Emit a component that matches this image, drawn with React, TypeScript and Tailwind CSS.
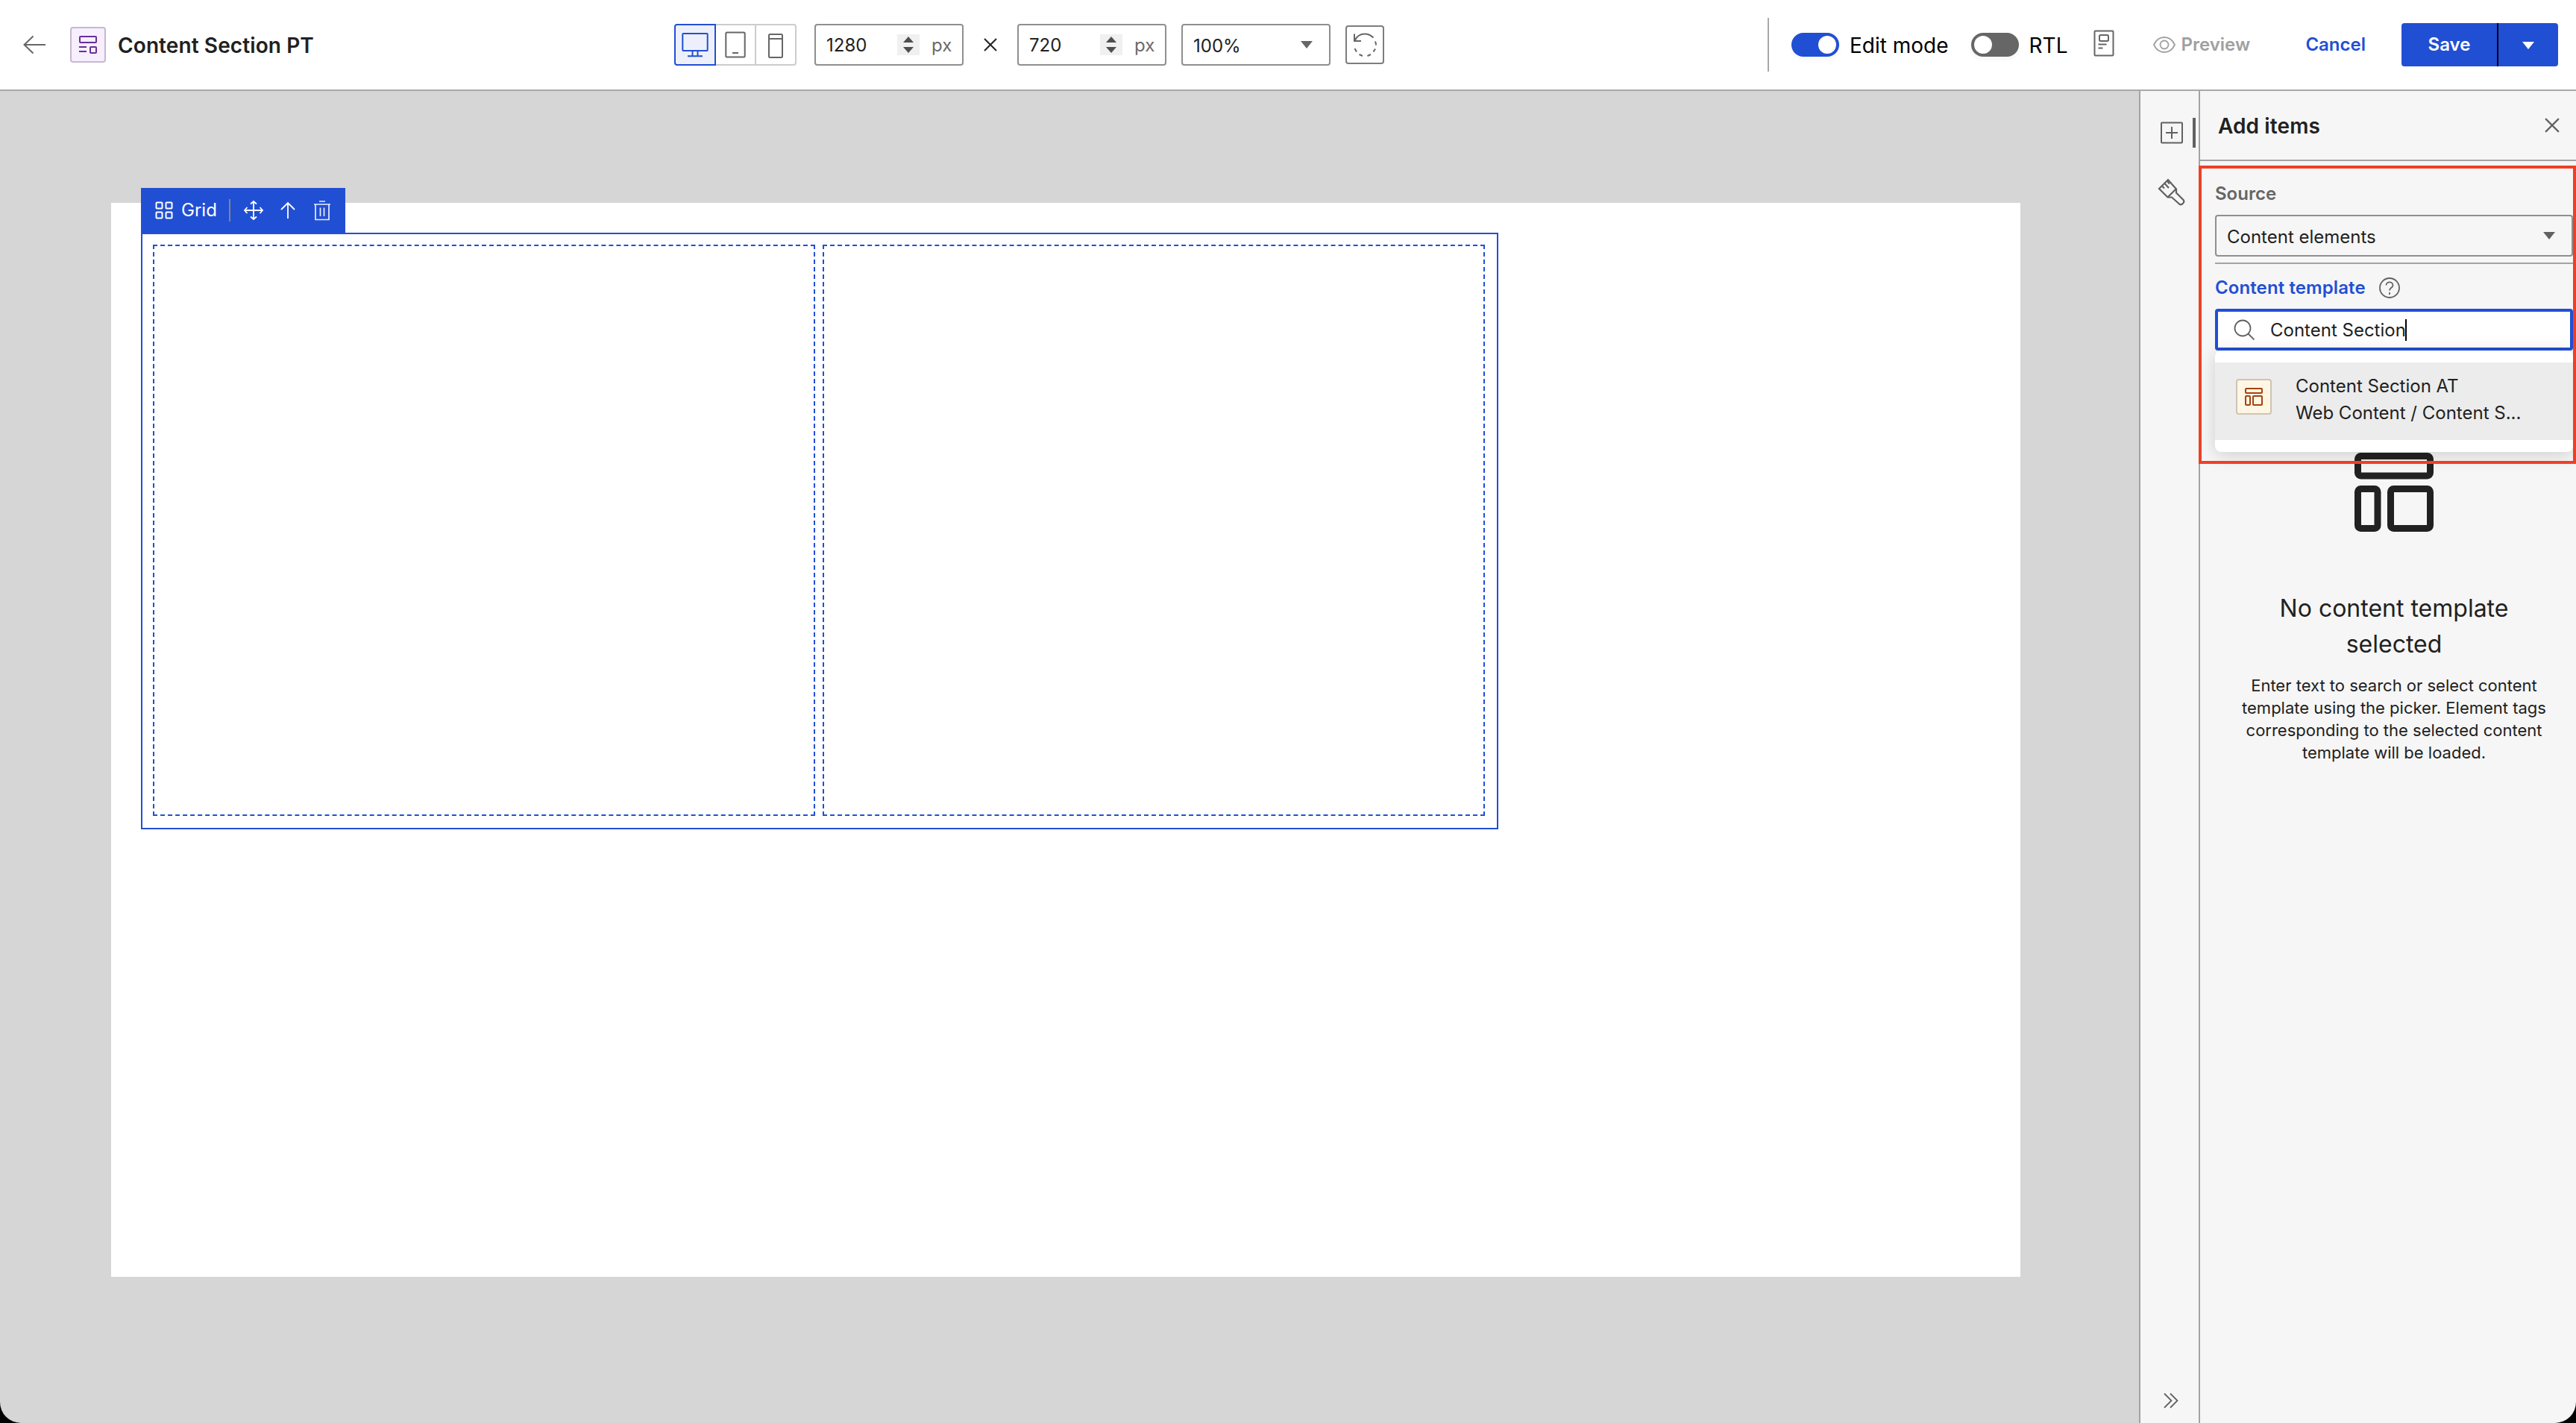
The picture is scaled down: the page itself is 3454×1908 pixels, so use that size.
import type { ReactNode } from 'react';

interface GlyphProps {
  className?: string;
}

interface TemplateGlyphProps extends GlyphProps {
  size: number;
  strokeWidth: number;
}

function ArrowLeftGlyph({ className }: GlyphProps) {
  return (
    <svg width="32" height="26" viewBox="0 0 32 26" fill="none" stroke="currentColor" strokeWidth="2" className={className}>
      <path d="M31 13H2M14.5 1.5L2.5 13l12 11.5" />
    </svg>
  );
}

function CrossGlyph({ className }: GlyphProps) {
  return (
    <svg viewBox="0 0 18 18" fill="none" stroke="currentColor" strokeWidth="2" className={className}>
      <path d="M1 1l16 16M17 1L1 17" />
    </svg>
  );
}

function Caret({ className }: GlyphProps) {
  return (
    <svg width="16" height="10" viewBox="0 0 16 10" fill="currentColor" className={className}>
      <path d="M0 0h16L8 10z" />
    </svg>
  );
}

// Header block on top, narrow + wide block below
function TemplateGlyph({ size, strokeWidth, className }: TemplateGlyphProps) {
  return (
    <svg width={size} height={size} viewBox="0 0 24 24" fill="none" stroke="currentColor" strokeWidth={strokeWidth} className={className}>
      <rect x="1" y="1" width="22" height="6" rx="1" />
      <rect x="1" y="11" width="6" height="12" rx="1" />
      <rect x="11" y="11" width="12" height="12" rx="1" />
    </svg>
  );
}

function NumberField({ value }: { value: string }) {
  return (
    <div className="flex h-14 w-[200px] items-center rounded border-2 border-[#8f8f8f] bg-white pl-[14px] text-2xl">
      <span className="w-[95px] pt-0.5 text-[#212121]">{value}</span>
      <span className="flex h-7 w-[30px] items-center justify-center bg-[#f0f0f0] text-[#4f4f4f]">
        <svg width="14" height="22" viewBox="0 0 14 22" fill="currentColor">
          <path d="M0 8h14L7 0zM0 14h14l-7 8z" />
        </svg>
      </span>
      <span className="ml-4 pt-0.5 text-[#6b6b6b]">px</span>
    </div>
  );
}

function Toggle({ on, children }: { on: boolean; children: ReactNode }) {
  return (
    <div className="flex items-center">
      <span
        className={
          on
            ? 'flex h-8 w-16 items-center justify-end rounded-full bg-[#214fd4] px-1 shadow-[0_3px_6px_rgba(0,0,0,0.05)]'
            : 'flex h-8 w-16 items-center rounded-full bg-[#666666] px-1 shadow-[0_3px_6px_rgba(0,0,0,0.05)]'
        }
      >
        <span className="size-6 rounded-full bg-white" />
      </span>
      <span className="ml-[14px] pt-0.5 text-[28px] leading-10 text-black">{children}</span>
    </div>
  );
}

function DeviceSwitcher() {
  return (
    <div className="flex h-14 w-[164px]">
      <button className="flex w-14 items-center justify-center rounded-l border-2 border-[#214fd4] bg-[#edf0fc] text-[#214fd4]">
        <svg width="36" height="34" viewBox="0 0 36 34" fill="none" stroke="currentColor" strokeWidth="2">
          <rect x="1.3" y="2" width="33.4" height="23" rx="1" />
          <path d="M14.5 25v7M21.5 25v7M8 32.3h20" />
        </svg>
      </button>
      <button className="flex w-[54px] items-center justify-center border-y-2 border-r-2 border-[#cccccc] text-[#666666]">
        <svg width="28" height="36" viewBox="0 0 28 36" fill="none" stroke="currentColor" strokeWidth="2">
          <rect x="1.3" y="1.5" width="25.4" height="33" rx="1.5" />
          <path d="M10 29h8" />
        </svg>
      </button>
      <button className="flex w-[54px] items-center justify-center rounded-r border-y-2 border-r-2 border-[#cccccc] pt-0.5 text-[#666666]">
        <svg width="20" height="34" viewBox="0 0 20 34" fill="none" stroke="currentColor" strokeWidth="2">
          <rect x="1" y="2" width="18" height="31" rx="1.5" />
          <path d="M1 8h18" />
        </svg>
      </button>
    </div>
  );
}

function Header() {
  return (
    <header className="flex h-[122px] shrink-0 items-center border-b-2 border-[#a8a8a8] bg-white">
      <ArrowLeftGlyph className="ml-[30px] text-[#666666]" />
      <span className="ml-8 flex size-12 items-center justify-center rounded border-2 border-[#c5bacd] bg-[#f7eefe] text-[#66309a]">
        <svg width="24" height="24" viewBox="0 0 24 24" fill="none" stroke="currentColor" strokeWidth="2">
          <rect x="1" y="1" width="22" height="8" rx="1" />
          <path d="M0 15h10M0 21h10" />
          <rect x="15" y="15" width="8" height="8" rx="1" />
        </svg>
      </span>
      <h1 className="ml-4 w-[746px] pt-0.5 text-[28px] font-semibold tracking-[0.1px] text-[#212121]">Content Section PT</h1>

      <DeviceSwitcher />
      <div className="ml-6 flex items-center">
        <NumberField value="1280" />
        <CrossGlyph className="mx-[27px] size-[18px] text-[#212121]" />
        <NumberField value="720" />
      </div>
      <div className="ml-5 flex h-14 w-[200px] items-center justify-between rounded border-2 border-[#8f8f8f] pr-[22px] pl-[14px] text-2xl text-[#212121]">
        <span className="pt-[3px]">100%</span>
        <Caret className="text-[#666666]" />
      </div>
      <button className="ml-5 flex h-[52px] w-[52px] items-center justify-center rounded border-2 border-[#7d7d7d] text-[#666666]">
        <svg width="34" height="34" viewBox="0 0 34 34" fill="none" stroke="currentColor" strokeWidth="2">
          <path d="M3.5 11.5C6 6 11 2.5 17 2.5c4.500 0 8.500 2 11.500 5" />
          <path d="M3 2.500V12h9" />
          <path d="M31 12.500a15 15 0 0 1 1 5M31 22.500l-2.500 4M25 30l-4.500 2M14 32l-4.500-2M6 26.500l-2.500-4.500" />
        </svg>
      </button>

      <div className="ml-[514px] flex h-[72px] items-center border-l-2 border-[#a8a8a8] pl-[30px]">
        <Toggle on>Edit mode</Toggle>
      </div>
      <div className="ml-[30px] flex items-center">
        <Toggle on={false}>RTL</Toggle>
      </div>
      <svg width="28" height="36" viewBox="0 0 28 36" fill="none" stroke="currentColor" strokeWidth="2" className="-mt-1 ml-[34px] text-[#666666]">
        <rect x="1.500" y="1.500" width="25" height="33" rx="1" />
        <rect x="8" y="7" width="12" height="8" rx="1.500" />
        <path d="M6.500 19.500h11M6.500 24.500h6" />
      </svg>
      <div className="ml-[51px] flex items-center text-2xl font-semibold text-[#a0a0a0]">
        <svg width="32" height="24" viewBox="0 0 32 24" fill="none" stroke="currentColor" strokeWidth="1.800">
          <path d="M2 12C5 5.500 10 2 16 2s11 3.500 14 10c-3 6.500-8 10-14 10S5 18.500 2 12z" />
          <circle cx="16" cy="12" r="5.500" />
        </svg>
        <span className="ml-[7px]">Preview</span>
      </div>
      <button className="ml-auto text-2xl font-semibold text-[#214fd4]">Cancel</button>
      <div className="mr-6 ml-[48px] flex h-[58px] w-[210px] overflow-hidden rounded bg-[#214fd4] text-2xl font-semibold text-white">
        <button className="w-[130px] border-r-2 border-black">Save</button>
        <button className="flex flex-1 items-center justify-center pt-px">
          <Caret />
        </button>
      </div>
    </header>
  );
}

function GridToolbar() {
  return (
    <div className="absolute -top-[62px] -left-0.5 flex h-[62px] w-[274px] items-center bg-[#214fd4] pb-0.5 text-white">
      <svg width="24" height="24" viewBox="0 0 24 24" fill="none" stroke="currentColor" strokeWidth="2" className="ml-[19px]">
        <rect x="1.500" y="1.500" width="8" height="8" rx="1" />
        <rect x="14.500" y="1.500" width="8" height="8" rx="1" />
        <rect x="1.500" y="14.500" width="8" height="8" rx="1" />
        <rect x="14.500" y="14.500" width="8" height="8" rx="1" />
      </svg>
      <span className="ml-[11px] w-16 text-2xl">Grid</span>
      <span className="h-[30px] w-0.5 bg-[#858585]" />
      <svg width="28" height="28" viewBox="0 0 28 28" fill="none" stroke="currentColor" strokeWidth="1.800" className="ml-[17px]">
        <path d="M14 2v24M2 14h24M10 5.500L14 2l4 3.500M10 22.500l4 3.500 4-3.500M5.500 10L2 14l3.500 4M22.500 10l3.500 4-3.500 4" />
      </svg>
      <svg width="20" height="24" viewBox="0 0 20 24" fill="none" stroke="currentColor" strokeWidth="1.800" className="ml-[22px]">
        <path d="M10 23V2M1 11l9-9 9 9" />
      </svg>
      <svg width="26" height="28" viewBox="0 0 26 28" fill="none" stroke="currentColor" strokeWidth="1.700" className="ml-[23px] opacity-90">
        <path d="M9 2h8M2 6h22M4 6v20.500h18V6M10.500 10.500v11.500M15.500 10.500v11.500" />
      </svg>
    </div>
  );
}

function Canvas() {
  return (
    <main className="flex-1 bg-[#d6d6d6] pt-[150px] pl-[149px]">
      <div className="h-[1440px] w-[2560px] bg-white pt-10 pl-10">
        <div className="relative flex h-[800px] w-[1820px] gap-[10px] border-2 border-[#214fd4] p-[14px] pb-4">
          <GridToolbar />
          <div className="w-[888px] border-2 border-dashed border-[#214fd4]" />
          <div className="w-[888px] border-2 border-dashed border-[#214fd4]" />
        </div>
      </div>
    </main>
  );
}

function Rail() {
  return (
    <nav className="flex w-20 shrink-0 flex-col border-l-2 border-[#a3a3a3] bg-[#f6f6f6] text-[#616161]">
      <div className="mt-9 flex h-10 items-center">
        <svg width="30" height="30" viewBox="0 0 30 30" fill="none" stroke="currentColor" strokeWidth="2" className="ml-[27px]">
          <rect x="1" y="1.500" width="28" height="27" rx="1" />
          <path d="M15 7v16M7 15h16" />
        </svg>
        <span className="ml-[13px] h-10 w-1 bg-[#616161]" />
      </div>
      <svg width="38" height="38" viewBox="0 0 38 38" fill="none" stroke="currentColor" strokeWidth="2.200" className="mt-[41px] ml-[23px]">
        <path d="M2 14L14 2l11 12.500v5l9.500 9.500c2.500 3-2 8-5.500 5.500L19 25.500h-5.500z" />
        <path d="M13.500 25.500L25 14M6 10.500l3 3M9.500 7l5.500 6M13 4l3 3.500" />
      </svg>
      <svg width="20" height="22" viewBox="0 0 20 22" fill="none" stroke="currentColor" strokeWidth="1.800" className="mt-auto mb-[19px] ml-[31px]">
        <path d="M1 1.500l9.500 9.500L1 20.500M9 1.500l9.500 9.500L9 20.500" />
      </svg>
    </nav>
  );
}

function SearchResults() {
  return (
    <div className="absolute inset-x-0 top-full z-10 rounded-lg bg-white py-4 shadow-[0_4px_24px_rgba(0,0,0,0.16)]">
      <div className="flex h-[104px] bg-[#ececec] pl-7 text-2xl leading-9 text-[#212121]">
        <span className="mt-[22px] flex size-12 items-center justify-center rounded border-2 border-[#cdc4b4] bg-[#fff6e4] text-[#a4430f]">
          <TemplateGlyph size={24} strokeWidth={2} />
        </span>
        <div className="mt-[14px] ml-8 w-[304px]">
          <p>Content Section AT</p>
          <p className="whitespace-nowrap">Web Content / Content S...</p>
        </div>
      </div>
    </div>
  );
}

function AddItemsPanel() {
  return (
    <aside className="relative flex w-[506px] shrink-0 flex-col border-l-2 border-[#a3a3a3] bg-[#f6f6f6]">
      <div className="flex h-[94px] items-center justify-between border-b-2 border-[#a3a3a3] pr-[22px] pl-6">
        <h2 className="pt-px text-[28px] font-semibold tracking-[0.1px] text-[#212121]">Add items</h2>
        <CrossGlyph className="size-5 text-[#616161]" />
      </div>

      <div className="mr-1 ml-5 flex flex-col text-2xl">
        <label className="mt-[26px] leading-9 font-semibold text-[#666666]">Source</label>
        <div className="mt-[10px] flex h-14 items-center justify-between rounded border-2 border-[#8f8f8f] pr-[22px] pl-[14px] text-[#212121]">
          <span className="pt-[3px]">Content elements</span>
          <Caret className="text-[#616161]" />
        </div>
        <hr className="mt-2 border-t-2 border-[#a3a3a3]" />
        <div className="mt-[14px] flex h-9 items-center font-semibold tracking-[0.1px] text-[#214fd4]">
          Content template
          <svg width="30" height="30" viewBox="0 0 30 30" fill="none" stroke="currentColor" strokeWidth="1.800" className="ml-[17px] text-[#616161]">
            <circle cx="15" cy="15" r="13" />
            <path d="M10.500 11.500c0-5.500 9-5.500 9 0 0 3.500-4.500 3-4.500 7M15 21v3" />
          </svg>
        </div>
        <div className="relative mt-[10px]">
          <div className="flex h-14 items-center rounded border-4 border-[#214fd4] bg-white pl-[21px] text-[#212121]">
            <svg width="28" height="28" viewBox="0 0 28 28" fill="none" stroke="currentColor" strokeWidth="1.800" className="text-[#616161]">
              <circle cx="12" cy="12" r="10.500" />
              <path d="M19.500 19.500L27.500 27.500" />
            </svg>
            <span className="ml-[21px] pt-0.5">Content Section</span>
            <span className="-ml-px h-[29px] w-0.5 bg-black" />
          </div>
          <SearchResults />
        </div>
      </div>

      <div className="mt-[137px] flex flex-col items-center pr-1 pl-5 text-center text-[#212121]">
        <svg width="106" height="106" viewBox="0 0 106 106" fill="none" stroke="currentColor" strokeWidth="9">
          <rect x="4.500" y="4.500" width="97" height="26.500" rx="4" />
          <rect x="4.500" y="48.500" width="26.500" height="53" rx="4" />
          <rect x="48.500" y="48.500" width="53" height="53" rx="4" />
        </svg>
        <h3 className="mt-[79px] w-[400px] text-[32px] leading-[48px]">No content template selected</h3>
        <p className="mt-4 w-[420px] text-[22px] leading-[30px]">
          Enter text to search or select content template using the picker. Element tags corresponding to the selected
          content template will be loaded.
        </p>
      </div>

      {/* Highlight around the source and template fields */}
      <div className="absolute top-[100px] right-0 -left-0.5 z-20 h-[400px] border-4 border-[#ee4026]" />
    </aside>
  );
}

export default function App() {
  return (
    <div className="h-[1908px] w-[3454px] bg-black font-['Inter',sans-serif]">
      <div className="flex h-full flex-col overflow-hidden rounded-b-[28px]">
        <Header />
        <div className="flex min-h-0 flex-1">
          <Canvas />
          <Rail />
          <AddItemsPanel />
        </div>
      </div>
    </div>
  );
}
